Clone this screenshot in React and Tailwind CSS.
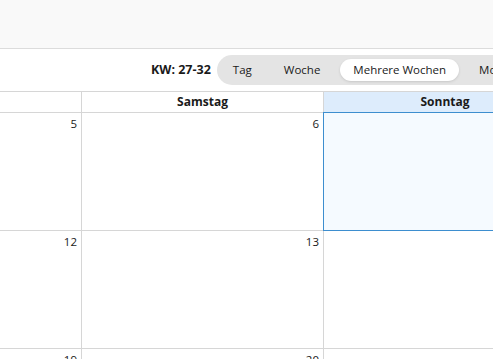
import React from "react";

const views = ["Tag", "Woche", "Mehrere Wochen", "Monat"];

const rows = [
  ["5", "6", ""],
  ["12", "13", ""],
  ["19", "20", ""],
];

export default function App() {
  return (
    <div
      className="h-[359px] w-[493px] overflow-hidden bg-white text-[11.5px] text-[#1a1a1a]"
      style={{ fontFamily: '"Open Sans", "Noto Sans", sans-serif' }}
    >
      <div className="h-[49px] border-b border-[#dcdcdc] bg-[#f9f9f9]" />

      <div className="flex h-[42px] items-center whitespace-nowrap pl-[151px]">
        <span className="mr-[6px] text-[12.5px] font-bold">KW: 27-32</span>
        <div className="flex shrink-0 items-center gap-2 rounded-full bg-[#e4e4e4] p-1">
          {views.map((v) => (
            <span
              key={v}
              className={`rounded-full py-[2px] text-[11.5px] leading-[18px] ${
                v === "Mehrere Wochen" ? "bg-white px-[13px] shadow-sm" : "px-3"
              }`}
            >
              {v}
            </span>
          ))}
        </div>
      </div>

      <div className="grid w-[566px] grid-cols-[82px_242px_242px] border-t border-[#d6d6d6]">
        <div className="h-[21px] border-r border-b border-[#d6d6d6]" />
        <div className="flex h-[21px] items-center justify-center border-r border-b border-[#d6d6d6] text-[12px] font-bold">
          Samstag
        </div>
        <div className="flex h-[21px] items-center justify-center border-b border-[#d6d6d6] bg-[#ddecfc] text-[12px] font-bold">
          Sonntag
        </div>

        {rows.map((r, i) => (
          <React.Fragment key={i}>
            <div className="h-[118px] border-r border-b border-[#d6d6d6] pt-[3px] pr-[4px] text-right leading-4">
              {r[0]}
            </div>
            <div className="h-[118px] border-r border-b border-[#d6d6d6] pt-[3px] pr-[4px] text-right leading-4">
              {r[1]}
            </div>
            <div
              className={`relative h-[118px] border-b border-[#d6d6d6] ${
                i === 0 ? "bg-[#f5faff]" : ""
              }`}
            >
              {i === 0 && (
                <div className="absolute -top-px -bottom-px -left-px right-0 border border-[#3d8ecf]" />
              )}
            </div>
          </React.Fragment>
        ))}
      </div>
    </div>
  );
}
